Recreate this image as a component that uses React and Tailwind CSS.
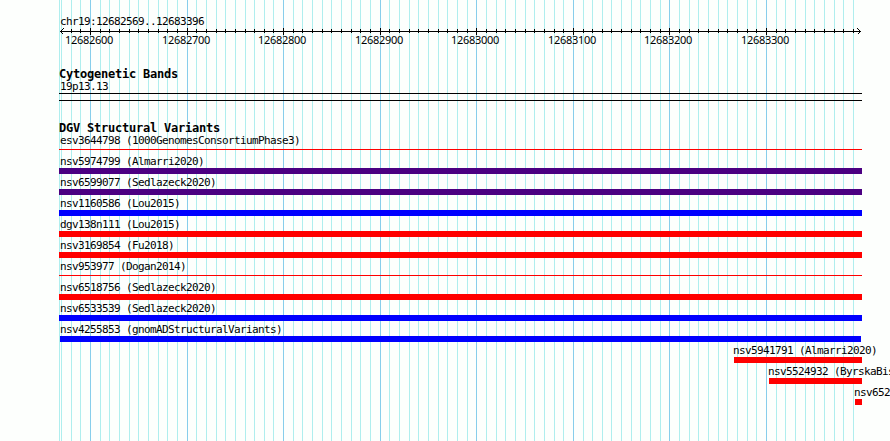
const START = 12682569;
const SCALE = 0.9657;
const toX = (pos) => Math.floor(60.56 + (pos - START) * SCALE);

const ticks = [];
for (let pos = 12682570; pos <= 12683390; pos += 10) {
    ticks.push({ pos, x: toX(pos), major: pos % 100 === 0 });
}

const variants = [
    { name: 'esv3644798 (1000GenomesConsortiumPhase3)', line: true, color: 'bg-[#ff0000]', start: 59, end: 862 },
    { name: 'nsv5974799 (Almarri2020)', color: 'bg-[#4b0082]', start: 59, end: 862 },
    { name: 'nsv6599077 (Sedlazeck2020)', color: 'bg-[#4b0082]', start: 59, end: 862 },
    { name: 'nsv1160586 (Lou2015)', color: 'bg-[#0000ff]', start: 59, end: 862 },
    { name: 'dgv138n111 (Lou2015)', color: 'bg-[#ff0000]', start: 59, end: 862 },
    { name: 'nsv3169854 (Fu2018)', color: 'bg-[#ff0000]', start: 59, end: 862 },
    { name: 'nsv953977 (Dogan2014)', line: true, color: 'bg-[#ff0000]', start: 59, end: 862 },
    { name: 'nsv6518756 (Sedlazeck2020)', color: 'bg-[#ff0000]', start: 59, end: 862 },
    { name: 'nsv6533539 (Sedlazeck2020)', color: 'bg-[#0000ff]', start: 59, end: 862 },
    { name: 'nsv4255853 (gnomADStructuralVariants)', color: 'bg-[#0000ff]', start: 60, end: 861 },
    { name: 'nsv5941791 (Almarri2020)', color: 'bg-[#ff0000]', start: 734, end: 862 },
    { name: 'nsv5524932 (ByrskaBis', color: 'bg-[#ff0000]', start: 769, end: 862 },
    { name: 'nsv652', color: 'bg-[#ff0000]', start: 855, end: 862 },
];

// Vertical guide lines drawn behind every track
const Grid = () => (
    <svg className="absolute inset-0" width="890" height="441" shapeRendering="crispEdges" aria-hidden="true">
        <rect x="59" width="1" height="441" fill="#afeeee" />
        {ticks.map(({ pos, x, major }) => (
            <rect key={pos} x={x} width="1" height="441" fill={major ? '#87ceeb' : '#afeeee'} />
        ))}
    </svg>
);

const Ruler = () => (
    <div className="relative h-[20px]">
        <svg className="block" width="890" height="8" shapeRendering="crispEdges">
            <rect x="60" y="4" width="801" height="1" />
            {ticks.slice(1).map(({ pos, x, major }) => (
                <rect key={pos} x={x} y={major ? 1 : 2} width="1" height={major ? 7 : 4} />
            ))}
            <path d="M63.5 1.5L60.5 4.5L63.5 7.5M857.5 1.5L860.5 4.5L857.5 7.5" fill="none" stroke="black" />
        </svg>
        {ticks.filter((t) => t.major).map(({ pos, x }) => (
            <span
                key={pos}
                className="absolute top-[7px] w-[48px] -translate-x-[25px] text-[11px] leading-[12px] tracking-[-0.29px] font-['Noto_Sans']"
                style={{ left: x }}
            >
                {pos}
            </span>
        ))}
    </div>
);

const TrackTitle = ({ children }) => (
    <h2 className="pl-[59px] h-[12px] text-[12px] leading-[12px] tracking-[-0.22px] font-bold">{children}</h2>
);

const Variant = ({ name, line, color, start, end }) => (
    <div className="h-[21px]">
        <div
            className="h-[13px] leading-[13px] whitespace-nowrap"
            style={{ paddingLeft: start < 100 ? 60 : start - 1 }}
        >
            {name}
        </div>
        <div
            className={line ? `h-px mt-[2px] ${color}` : `h-[6px] ${color}`}
            style={{ marginLeft: start, width: end - start }}
        />
    </div>
);

export default function App() {
    return (
        <div className="relative w-[890px] h-[441px] overflow-hidden bg-[#fdfffd] text-black font-['DejaVu_Sans_Mono',monospace] text-[11px] tracking-[-0.62px]">
            <Grid />
            <main className="relative pt-[16px]">
                <div className="pl-[60px] h-[11px] leading-[12px]">chr19:12682569..12683396</div>
                <Ruler />
                <section className="pt-[21px]">
                    <TrackTitle>Cytogenetic Bands</TrackTitle>
                    <div className="pl-[60px] h-[13px] leading-[13px]">19p13.13</div>
                    <div className="ml-[59px] w-[803px] h-[8px] border-y border-black" />
                </section>
                <section className="pt-[21px]">
                    <TrackTitle>DGV Structural Variants</TrackTitle>
                    {variants.map((variant) => (
                        <Variant key={variant.name} {...variant} />
                    ))}
                </section>
            </main>
        </div>
    );
}
